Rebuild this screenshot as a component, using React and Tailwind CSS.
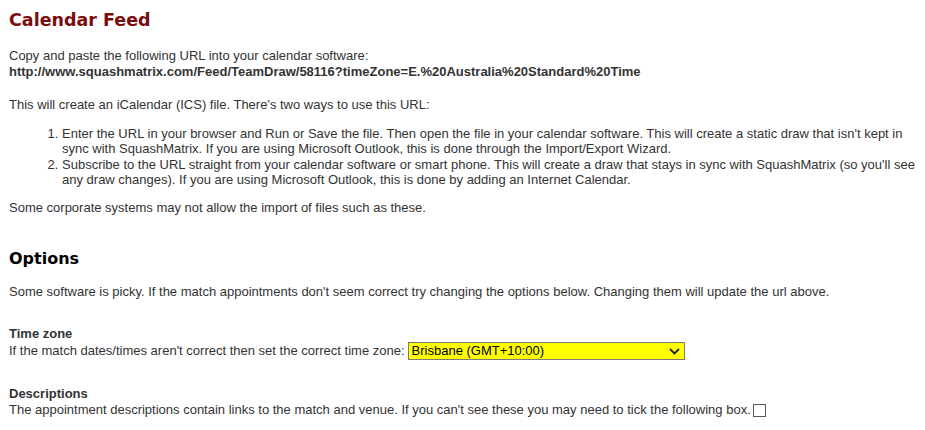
export default function App() {
  const body = 'font-["Liberation_Sans",Arial,sans-serif] text-[13px] leading-[16px] text-[#333]'
  const head = 'font-["DejaVu_Sans",Verdana,sans-serif] font-bold'

  return (
    <div className={`${body} bg-white w-[925px] h-[430px] overflow-hidden pl-[9px] pt-[8px]`}>
      <h1 className={`${head} text-[17.5px] leading-[24px] text-[#7b0c0c]`}>Calendar Feed</h1>

      <p className="mt-[16px]">Copy and paste the following URL into your calendar software:</p>
      <p className="font-bold">http://www.squashmatrix.com/Feed/TeamDraw/58116?timeZone=E.%20Australia%20Standard%20Time</p>

      <p className="mt-[17px]">This will create an iCalendar (ICS) file. There's two ways to use this URL:</p>

      <ol className="list-decimal pl-[53px] mt-[13px] pr-[5px] leading-[15.3px]">
        <li>
          Enter the URL in your browser and Run or Save the file. Then open the file in your calendar software. This will create a static draw that isn't kept in sync with SquashMatrix. If you are using Microsoft Outlook, this is done through the Import/Export Wizard.
        </li>
        <li>
          Subscribe to the URL straight from your calendar software or smart phone. This will create a draw that stays in sync with SquashMatrix (so you'll see any draw changes). If you are using Microsoft Outlook, this is done by adding an Internet Calendar.
        </li>
      </ol>

      <p className="mt-[13px]">Some corporate systems may not allow the import of files such as these.</p>

      <h2 className={`${head} text-[16px] leading-[22px] text-black mt-[32px]`}>Options</h2>

      <p className="mt-[14px]">Some software is picky. If the match appointments don't seem correct try changing the options below. Changing them will update the url above.</p>

      <div className="mt-[26px]">
        <div className="font-bold">Time zone</div>
        <div className="flex items-center">
          <span>If the match dates/times aren't correct then set the correct time zone:</span>
          <div className="ml-[3px] w-[277px] h-[18px] border border-[#7a7a7a] bg-[#ffff00] flex items-center justify-between pl-[3px] pr-[4px]">
            <span className="text-black">Brisbane (GMT+10:00)</span>
            <svg width="11" height="7" viewBox="0 0 11 7" fill="none">
              <path d="M1 1l4.5 4.5L10 1" stroke="#222" strokeWidth="1.8" />
            </svg>
          </div>
        </div>
      </div>

      <div className="mt-[26px]">
        <div className="font-bold">Descriptions</div>
        <div className="flex items-center">
          <span>The appointment descriptions contain links to the match and venue. If you can't see these you may need to tick the following box.</span>
          <span className="ml-[2px] w-[13px] h-[13px] border border-[#555] bg-white inline-block" />
        </div>
      </div>
    </div>
  )
}
